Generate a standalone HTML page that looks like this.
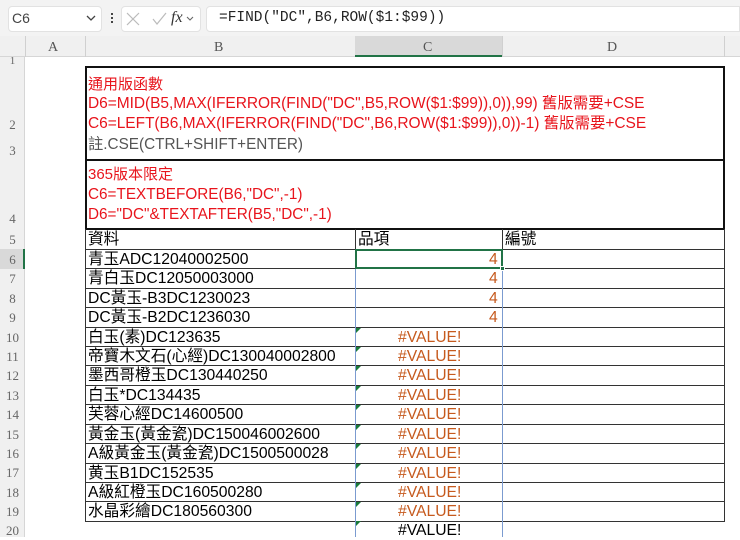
<!DOCTYPE html>
<html><head><meta charset="utf-8"><style>
*{margin:0;padding:0;box-sizing:border-box}
body{width:740px;height:537px;overflow:hidden;background:#fff;position:relative;font-family:"Liberation Sans","Noto Sans CJK TC",sans-serif}
.a{position:absolute}
.t{position:absolute;font-size:15.7px;white-space:nowrap;line-height:19px}
.r{color:#e8141c}
.rn{position:absolute;left:0;width:25px;text-align:center;font-size:13px;color:#666;font-family:"Liberation Serif",serif}
.hl{position:absolute;left:85px;width:639px;height:1px;background:#333}
.v{color:#c65a1e}
.tri{position:absolute;width:0;height:0;border-top:5px solid #1a7a3a;border-right:5px solid transparent}
</style></head><body>
<div class="a" style="left:0;top:0;width:740px;height:36px;background:#f3f3f3"></div>
<div class="a" style="left:8px;top:6px;width:94px;height:26px;background:#fff;border-radius:4px;border:1px solid #e2e2e2"></div>
<div class="t" style="left:12px;top:9px;font-size:14px;color:#444">C6</div>
<svg class="a" style="left:86px;top:14px" width="10" height="8"><path d="M1 2l4 4 4-4" stroke="#444" fill="none" stroke-width="1.3"/></svg>
<div class="a" style="left:111px;top:13px;width:2px;height:2px;background:#444;box-shadow:0 4px #444,0 8px #444"></div>
<div class="a" style="left:121px;top:6px;width:80px;height:26px;background:#fff;border-radius:4px;border:1px solid #e2e2e2"></div>
<svg class="a" style="left:125px;top:11px" width="70" height="16"><path d="M2 2l12 12M14 2L2 14" stroke="#bbb" stroke-width="1.2"/><path d="M28 8l4 5 9-11" stroke="#bbb" fill="none" stroke-width="1.2"/><path d="M62 6l3 3 3-3" stroke="#666" fill="none" stroke-width="1.1"/></svg>
<div class="t" style="left:171px;top:8px;font-family:'Liberation Serif',serif;font-style:italic;font-size:16px;color:#333">fx</div>
<div class="a" style="left:206px;top:6px;width:534px;height:26px;background:#fff;border-radius:4px 0 0 4px;border:1px solid #e2e2e2"></div>
<div class="t" style="left:219px;top:9px;font-family:'Liberation Mono',monospace;font-size:14.5px;color:#222">=FIND("DC",B6,ROW($1:$99))</div>
<div class="a" style="left:0;top:36px;width:740px;height:21px;background:#f0f0f0;border-bottom:1px solid #d6d6d6"></div>
<div class="a" style="left:355px;top:36px;width:147px;height:21px;background:#d9d9d9;border-bottom:2px solid #217346"></div>
<div class="a" style="left:25px;top:36px;width:1px;height:21px;background:#d0d0d0"></div>
<div class="a" style="left:85px;top:36px;width:1px;height:21px;background:#d0d0d0"></div>
<div class="a" style="left:502px;top:36px;width:1px;height:21px;background:#d0d0d0"></div>
<div class="a" style="left:724px;top:36px;width:1px;height:21px;background:#d0d0d0"></div>
<div class="t" style="left:48px;top:38px;font-family:'Liberation Serif',serif;color:#555;font-size:14px">A</div>
<div class="t" style="left:214px;top:38px;font-family:'Liberation Serif',serif;color:#555;font-size:14px">B</div>
<div class="t" style="left:423px;top:38px;font-family:'Liberation Serif',serif;color:#555;font-size:14px">C</div>
<div class="t" style="left:607px;top:38px;font-family:'Liberation Serif',serif;color:#555;font-size:14px">D</div>
<div class="a" style="left:0;top:57px;width:25px;height:480px;background:#f0f0f0;border-right:1px solid #d6d6d6"></div>
<div class="a" style="left:0;top:249px;width:25px;height:20px;background:#d9d9d9;border-right:2px solid #217346"></div>
<div class="rn" style="top:55px;font-size:11px">1</div>
<div class="rn" style="top:117px">2</div>
<div class="rn" style="top:143px">3</div>
<div class="rn" style="top:211px">4</div>
<div class="rn" style="top:232px">5</div>
<div class="rn" style="top:252px">6</div><div class="rn" style="top:271px">7</div><div class="rn" style="top:291px">8</div><div class="rn" style="top:310px">9</div><div class="rn" style="top:330px">10</div><div class="rn" style="top:349px">11</div><div class="rn" style="top:368px">12</div><div class="rn" style="top:388px">13</div><div class="rn" style="top:407px">14</div><div class="rn" style="top:427px">15</div><div class="rn" style="top:446px">16</div><div class="rn" style="top:465px">17</div><div class="rn" style="top:485px">18</div><div class="rn" style="top:504px">19</div><div class="rn" style="top:523px">20</div>
<div class="a" style="left:85px;top:66px;width:640px;height:95px;border:2px solid #111"></div>
<div class="a" style="left:85px;top:160px;width:640px;height:70px;border:1px solid #111;border-width:1px 2px 2px 2px"></div>
<div class="t r" style="left:88px;top:75px;font-size:15px">通用版函數</div>
<div class="t r" style="left:88px;top:94px;font-size:15.5px;letter-spacing:-0.05px">D6=MID(B5,MAX(IFERROR(FIND("DC",B5,ROW($1:$99)),0)),99) 舊版需要+CSE</div>
<div class="t r" style="left:88px;top:114px;font-size:15.5px;letter-spacing:-0.05px">C6=LEFT(B6,MAX(IFERROR(FIND("DC",B6,ROW($1:$99)),0))-1) 舊版需要+CSE</div>
<div class="t" style="left:88px;top:135px;font-size:15.3px;color:#555">註.CSE(CTRL+SHIFT+ENTER)</div>
<div class="t r" style="left:88px;top:165px;font-size:15px">365版本限定</div>
<div class="t r" style="left:88px;top:185px;font-size:15.3px">C6=TEXTBEFORE(B6,"DC",-1)</div>
<div class="t r" style="left:88px;top:205px;font-size:15.3px">D6="DC"&amp;TEXTAFTER(B5,"DC",-1)</div>
<div class="a" style="left:85px;top:229px;width:640px;height:293px;border:1px solid #333;border-width:0 1px 1px 1px"></div>
<div class="hl" style="top:249px"></div><div class="hl" style="top:268px"></div><div class="hl" style="top:288px"></div><div class="hl" style="top:307px"></div><div class="hl" style="top:327px"></div><div class="hl" style="top:346px"></div><div class="hl" style="top:365px"></div><div class="hl" style="top:385px"></div><div class="hl" style="top:404px"></div><div class="hl" style="top:424px"></div><div class="hl" style="top:443px"></div><div class="hl" style="top:463px"></div><div class="hl" style="top:482px"></div><div class="hl" style="top:501px"></div>
<div class="a" style="left:355px;top:229px;width:1px;height:20px;background:#333"></div>
<div class="a" style="left:502px;top:229px;width:1px;height:20px;background:#333"></div>
<div class="a" style="left:355px;top:249px;width:1px;height:288px;background:#7b9bd0"></div>
<div class="a" style="left:502px;top:249px;width:1px;height:288px;background:#7b9bd0"></div>
<div class="a" style="left:355px;top:249px;width:148px;height:20px;border:2px solid #217346"></div>
<div class="a" style="left:500px;top:266px;width:5px;height:5px;background:#217346;border:1px solid #fff"></div>
<div class="t" style="left:88px;top:230px">資料</div>
<div class="t" style="left:358px;top:230px">品項</div>
<div class="t" style="left:505px;top:230px">編號</div>
<div class="t" style="left:88px;top:250px">青玉ADC12040002500</div>
<div class="t" style="left:88px;top:269px">青白玉DC12050003000</div>
<div class="t" style="left:88px;top:289px">DC黃玉-B3DC1230023</div>
<div class="t" style="left:88px;top:308px">DC黃玉-B2DC1236030</div>
<div class="t" style="left:88px;top:328px">白玉(素)DC123635</div>
<div class="t" style="left:88px;top:347px">帝寶木文石(心經)DC130040002800</div>
<div class="t" style="left:88px;top:366px">墨西哥橙玉DC130440250</div>
<div class="t" style="left:88px;top:386px">白玉*DC134435</div>
<div class="t" style="left:88px;top:405px">芙蓉心經DC14600500</div>
<div class="t" style="left:88px;top:425px">黃金玉(黃金瓷)DC150046002600</div>
<div class="t" style="left:88px;top:444px">A級黃金玉(黃金瓷)DC1500500028</div>
<div class="t" style="left:88px;top:464px">黄玉B1DC152535</div>
<div class="t" style="left:88px;top:483px">A級紅橙玉DC160500280</div>
<div class="t" style="left:88px;top:502px">水晶彩繪DC180560300</div>
<div class="t v" style="left:489px;top:250px">4</div>
<div class="t v" style="left:489px;top:269px">4</div>
<div class="t v" style="left:489px;top:289px">4</div>
<div class="t v" style="left:489px;top:308px">4</div>
<div class="t v" style="left:398px;top:328px">#VALUE!</div>
<div class="t v" style="left:398px;top:347px">#VALUE!</div>
<div class="t v" style="left:398px;top:366px">#VALUE!</div>
<div class="t v" style="left:398px;top:386px">#VALUE!</div>
<div class="t v" style="left:398px;top:405px">#VALUE!</div>
<div class="t v" style="left:398px;top:425px">#VALUE!</div>
<div class="t v" style="left:398px;top:444px">#VALUE!</div>
<div class="t v" style="left:398px;top:464px">#VALUE!</div>
<div class="t v" style="left:398px;top:483px">#VALUE!</div>
<div class="t v" style="left:398px;top:502px">#VALUE!</div>
<div class="t" style="left:398px;top:521px">#VALUE!</div>
<div class="tri" style="left:356px;top:328px"></div><div class="tri" style="left:356px;top:347px"></div><div class="tri" style="left:356px;top:366px"></div><div class="tri" style="left:356px;top:386px"></div><div class="tri" style="left:356px;top:405px"></div><div class="tri" style="left:356px;top:425px"></div><div class="tri" style="left:356px;top:444px"></div><div class="tri" style="left:356px;top:464px"></div><div class="tri" style="left:356px;top:483px"></div><div class="tri" style="left:356px;top:502px"></div><div class="tri" style="left:356px;top:521px"></div>
</body></html>
